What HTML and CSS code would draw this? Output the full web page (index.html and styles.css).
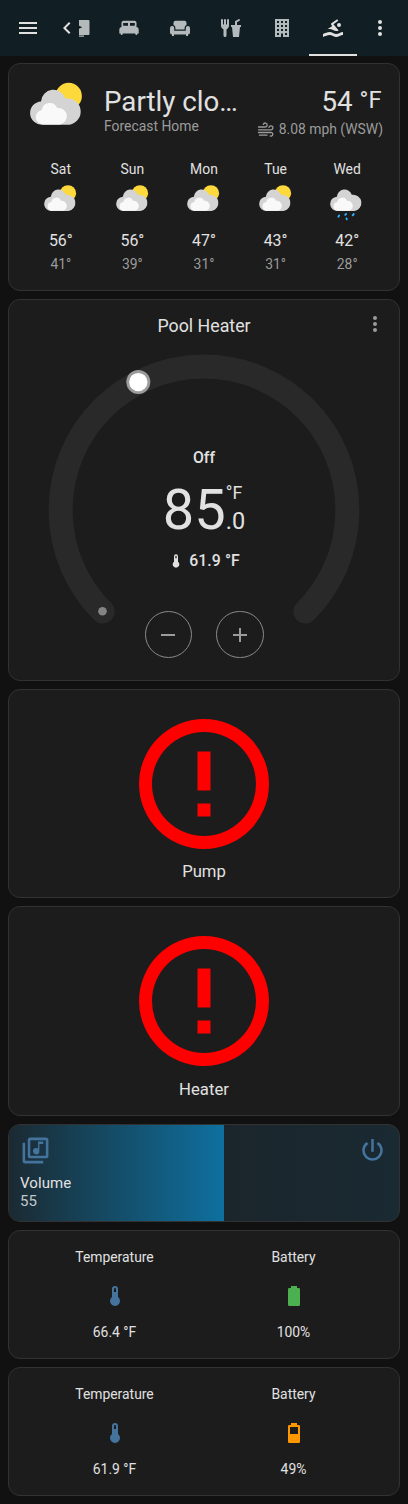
FILE: index.html
```html
<!DOCTYPE html>
<html lang="en">
<head>
<meta charset="utf-8">
<title>Home</title>
<link rel="stylesheet" href="styles.css">
</head>
<body>
<svg class="defs" width="0" height="0">
  <defs>
    <g id="cloud">
      <path fill="#d4d4d4" d="M17.500 48.700A11.500 11.500 0 0 1 16 25.400A12.400 12.400 0 0 1 40.200 22.400A13.300 13.300 0 1 1 44.500 48.700Z"/>
      <path fill="#f9f9f9" d="M18.200 48.400A7.300 7.300 0 0 1 16.800 33.900A8 8 0 0 1 32.200 32.100A8.200 8.200 0 1 1 35 48.400Z"/>
    </g>
    <g id="partly">
      <circle cx="43.700" cy="20" r="13.200" fill="#fdd93c"/>
      <use href="#cloud"/>
    </g>
    <g id="rainy">
      <use href="#cloud"/>
      <path stroke="#30b3ff" stroke-width="3" stroke-linecap="round" d="M19.700 56l-1.200 1.800M31 53.300l-1.400 1.600M43.200 53.600l-1.600 2M31.500 60.500l.6 1.500"/>
    </g>
    <path id="thermo" d="M15 13V5A3 3 0 0 0 9 5V13A5 5 0 1 0 15 13M12 4A1 1 0 0 1 13 5V8H11V5A1 1 0 0 1 12 4Z"/>
    <path id="dots" d="M12 16A2 2 0 1 1 12 20A2 2 0 1 1 12 16M12 10A2 2 0 1 1 12 14A2 2 0 1 1 12 10M12 4A2 2 0 1 1 12 8A2 2 0 1 1 12 4Z"/>
    <path id="alert" d="M11 15H13V17H11V15M11 7H13V13H11V7M12 2A10 10 0 1 0 12 22A10 10 0 1 0 12 2M12 20A8 8 0 1 1 12 4A8 8 0 1 1 12 20Z"/>
  </defs>
</svg>

<header class="bar">
  <svg class="icon bright menu" viewBox="0 0 24 24"><path d="M3 6H21V8H3V6M3 11H21V13H3V11M3 16H21V18H3V16Z"/></svg>
  <svg class="icon bright back" viewBox="0 0 24 24"><path d="M15.410 16.580L10.830 12L15.410 7.410L14 6L8 12L14 18L15.410 16.580Z"/></svg>
  <nav class="tabs">
    <span class="tab cut"><svg class="door" viewBox="0 0 11 24"><path d="M0 4H9.500A1 1 0 0 1 10.500 5V18A1 1 0 0 1 9.500 19H0V12.800L3.300 11.300L0 9.800ZM0 19.500H5V20.700H0Z"/></svg></span>
    <span class="tab"><svg class="icon" viewBox="0 0 24 24"><path fill-rule="evenodd" d="M4.500 11V6.500A2 2 0 0 1 6.500 4.700H17.500A2 2 0 0 1 19.500 6.500V11A2.500 2.500 0 0 1 21.700 13.500V17.500H20.500L20 19H18.700L18.200 17.500H5.800L5.300 19H4L3.500 17.500H2.300V13.500A2.500 2.500 0 0 1 4.500 11M6.200 7V9.800H11V7ZM13 7V9.800H17.800V7Z"/></svg></span>
    <span class="tab"><svg class="icon" viewBox="0 0 24 24"><path d="M5.500 9V6.500A2 2 0 0 1 7.500 4.700H16.500A2 2 0 0 1 18.500 6.500V9A3 3 0 0 0 16.600 11.500V13.500H7.400V11.500A3 3 0 0 0 5.500 9ZM4 10A2 2 0 0 1 6.200 12V14.800H17.800V12A2 2 0 0 1 22 12V16.500A2 2 0 0 1 20 18.500V20H18V18.500H6V20H4V18.500A2 2 0 0 1 2 16.500V12A2 2 0 0 1 4 10Z"/></svg></span>
    <span class="tab"><svg class="icon" viewBox="0 0 24 24"><path d="M3 3A1 1 0 0 0 2 4V9.500C2 11.190 3.030 12.630 4.500 13.220V19.500A1.500 1.500 0 0 0 7.500 19.500V13.220C8.970 12.630 10 11.190 10 9.500V4A1 1 0 0 0 8 4V8A.5.5 0 0 1 7 8V4A1 1 0 0 0 5 4V8A.5.5 0 0 1 4 8V4A1 1 0 0 0 3 3M19.880 3C19.750 3 19.620 3.090 19.500 3.160L16 5.250V9H12V11H13L14 21H20L21 11H22V9H18V6.340L20.500 4.840C21 4.560 21.130 4 20.840 3.500C20.630 3.140 20.260 2.950 19.880 3Z"/></svg></span>
    <span class="tab"><svg class="icon" viewBox="0 0 24 24"><path fill-rule="evenodd" d="M5 3V21H11V17.500H13V21H19V3H5M7 5H9V7H7V5M11 5H13V7H11V5M15 5H17V7H15V5M7 9H9V11H7V9M11 9H13V11H11V9M15 9H17V11H15V9M7 13H9V15H7V13M11 13H13V15H11V13M15 13H17V15H15V13M7 17H9V19H7V17M15 17H17V19H15V17Z"/></svg></span>
    <span class="tab active"><svg class="icon bright" viewBox="0 0 24 24"><path d="M2 18C4.220 17 6.440 16 8.670 16C10.890 16 13.110 18 15.330 18C17.560 18 19.780 16 22 16V19C19.780 19 17.560 21 15.330 21C13.110 21 10.890 19 8.670 19C6.440 19 4.220 20 2 21V18M8.670 13C7.890 13 7.120 13.120 6.350 13.320L11.270 9.880L10.230 8.640C10.090 8.470 10 8.240 10 8C10 7.660 10.170 7.350 10.440 7.170L16.160 3.170L17.310 4.800L12.470 8.190L17.700 14.420C16.910 14.750 16.120 15 15.330 15C13.110 15 10.890 13 8.670 13M18 7A2 2 0 1 1 18 11A2 2 0 1 1 18 7Z"/></svg></span>
  </nav>
  <svg class="icon bright more" viewBox="0 0 24 24"><use href="#dots"/></svg>
</header>

<main class="cards">
  <section class="card weather">
    <div class="now">
      <svg class="now-icon" viewBox="0 0 64 64"><use href="#partly"/></svg>
      <div class="now-state">
        <div class="state">Partly clo…</div>
        <div class="sub">Forecast Home</div>
      </div>
      <div class="now-temp">
        <div class="temp">54 <span>°F</span></div>
        <div class="sub wind"><svg viewBox="0 0 18 18"><path d="M1.500 6H7.500M6.300 3.400A2 2 0 1 1 8.300 6M1.500 8.800H14M12 6.400A2 2 0 1 1 14 8.800M1.500 11.500H14.500A1.800 1.800 0 1 1 13.200 15M2.500 14.200H10"/></svg>8.08 mph (WSW)</div>
      </div>
    </div>
    <div class="days">
      <div class="day">Sat<svg viewBox="0 0 64 64"><use href="#partly"/></svg><b>56°</b><i>41°</i></div>
      <div class="day">Sun<svg viewBox="0 0 64 64"><use href="#partly"/></svg><b>56°</b><i>39°</i></div>
      <div class="day">Mon<svg viewBox="0 0 64 64"><use href="#partly"/></svg><b>47°</b><i>31°</i></div>
      <div class="day">Tue<svg viewBox="0 0 64 64"><use href="#partly"/></svg><b>43°</b><i>31°</i></div>
      <div class="day">Wed<svg viewBox="0 0 64 64"><use href="#rainy"/></svg><b>42°</b><i>28°</i></div>
    </div>
  </section>

  <section class="card heater">
    <svg class="icon heater-more" viewBox="0 0 24 24"><use href="#dots"/></svg>
    <h2 class="heater-title">Pool Heater</h2>
    <div class="dial">
      <svg class="ring" viewBox="0 0 312 312">
        <path d="M54.600 257.400A143.400 143.400 0 1 1 257.400 257.400" fill="none" stroke="#292929" stroke-width="24" stroke-linecap="round"/>
        <circle cx="54.500" cy="257.300" r="4.300" fill="#848484"/>
        <circle cx="90.300" cy="28.100" r="12" fill="#9b9b9b"/>
        <circle cx="90.300" cy="28.100" r="9.200" fill="#fff"/>
      </svg>
      <div class="readout">
        <div class="mode">Off</div>
        <div class="target"><span class="whole">85</span><span class="parts"><span class="unit">°F</span><span class="dec">.0</span></span></div>
        <div class="current"><svg viewBox="0 0 24 24"><use href="#thermo"/></svg>61.9 °F</div>
        <div class="steps">
          <span class="step"><svg class="icon" viewBox="0 0 24 24"><path d="M19 13H5V11H19V13Z"/></svg></span>
          <span class="step"><svg class="icon" viewBox="0 0 24 24"><path d="M19 13H13V19H11V13H5V11H11V5H13V11H19V13Z"/></svg></span>
        </div>
      </div>
    </div>
  </section>

  <section class="card alert"><svg viewBox="0 0 24 24"><use href="#alert"/></svg><span>Pump</span></section>
  <section class="card alert"><svg viewBox="0 0 24 24"><use href="#alert"/></svg><span>Heater</span></section>

  <section class="card volume">
    <div class="fill" style="width: 55%"></div>
    <div class="volume-body">
      <div class="volume-icons">
        <svg viewBox="0 0 24 24"><path fill-rule="evenodd" d="M20 2H8A2 2 0 0 0 6 4V16A2 2 0 0 0 8 18H20A2 2 0 0 0 22 16V4A2 2 0 0 0 20 2M20 16H8V4H20V16M12.500 15A2.500 2.500 0 0 0 15 12.500V7H18V5H14V10.500A2.500 2.500 0 1 0 12.500 15M4 6H2V20A2 2 0 0 0 4 22H18V20H4V6Z"/></svg>
        <svg viewBox="0 0 24 24"><path d="M16.560 5.440L15.110 6.890C16.840 7.940 18 9.830 18 12A6 6 0 0 1 6 12C6 9.830 7.160 7.940 8.880 6.880L7.440 5.440C5.360 6.880 4 9.280 4 12A8 8 0 0 0 20 12C20 9.280 18.640 6.880 16.560 5.440M13 3H11V13H13Z"/></svg>
      </div>
      <div class="volume-name">Volume</div>
      <div class="volume-value">55</div>
    </div>
  </section>

  <section class="card glance">
    <div class="entity">Temperature<svg class="icon blue" viewBox="0 0 24 24"><use href="#thermo"/></svg><span>66.4 °F</span></div>
    <div class="entity">Battery<svg class="icon green" viewBox="0 0 24 24"><path d="M16.670 4H15V2H9V4H7.330A1.330 1.330 0 0 0 6 5.330V20.670A1.330 1.330 0 0 0 7.330 22H16.670A1.330 1.330 0 0 0 18 20.670V5.330A1.330 1.330 0 0 0 16.670 4Z"/></svg><span>100%</span></div>
  </section>
  <section class="card glance">
    <div class="entity">Temperature<svg class="icon blue" viewBox="0 0 24 24"><use href="#thermo"/></svg><span>61.9 °F</span></div>
    <div class="entity">Battery<svg class="icon orange" viewBox="0 0 24 24"><path fill-rule="evenodd" d="M16.670 4H15V2H9V4H7.330A1.330 1.330 0 0 0 6 5.330V20.670A1.330 1.330 0 0 0 7.330 22H16.670A1.330 1.330 0 0 0 18 20.670V5.330A1.330 1.330 0 0 0 16.670 4M16 13H8V6H16V13Z"/></svg><span>49%</span></div>
  </section>
</main>
</body>
</html>
```
FILE: styles.css
```css
* { box-sizing: border-box; }
body { margin: 0; background: #111; color: #e1e1e1; font-family: Roboto, "Noto Sans", sans-serif; font-size: 13.900px; line-height: 20px; }
svg { display: block; flex: none; fill: currentColor; }
.defs { position: absolute; }
.icon { width: 24px; height: 24px; }
.bar { height: 56px; background: #111e23; color: #b4b9bb; display: flex; align-items: center; padding-left: 15.500px; }
.bright { color: #e1e1e1; }
.back { margin-left: 15.500px; }
.tabs { display: flex; align-self: stretch; }
.tab { width: 51px; display: flex; align-items: center; justify-content: center; }
.tab.cut { width: 24px; justify-content: flex-start; }
.door { width: 11px; height: 24px; }
.tab.active { width: 48px; margin-left: 1.5px; border-bottom: 2px solid #e1e1e1; padding-top: 2px; }
.more { margin-left: 11px; }

.cards { display: flex; flex-direction: column; gap: 8px; padding: 7.400px 8px 8px; }
.card { background: #1c1c1c; border: 1px solid #323232; border-radius: 12px; }

.weather { height: 227.600px; padding: 12px 16px 0; }
.now { display: flex; height: 83px; }
.now-icon { width: 64px; height: 64px; }
.now-state { flex: 1; min-width: 0; margin-left: 15px; padding-top: 8px; }
.state { font-size: 27.700px; line-height: 35px; white-space: nowrap; }
.sub { color: #9b9b9b; line-height: 14px; }
.now-temp { text-align: right; padding-top: 8px; }
.temp { font-size: 27.700px; line-height: 35px; padding-right: 1.500px; }
.temp span { font-size: 23.700px; vertical-align: 3px; line-height: 24px; }
.wind { display: flex; align-items: center; justify-content: flex-end; gap: 4px; }
.wind svg { width: 18px; height: 18px; fill: none; stroke: currentColor; stroke-width: 1.300; stroke-linecap: round; margin-top: 2px; }
.days { display: flex; }
.day { flex: 1; display: flex; flex-direction: column; align-items: center; }
.day svg { width: 39.500px; height: 39.500px; margin: 2px 0 8.500px; }
.day b { font-weight: 400; font-size: 15.900px; line-height: 24px; }
.day i { font-style: normal; color: #9b9b9b; margin-top: 1px; }

.heater { height: 382px; position: relative; display: flex; flex-direction: column; align-items: center; padding-top: 14px; }
.heater-more { position: absolute; top: 12px; right: 12px; color: #9b9b9b; }
.heater-title { margin: 0; font-size: 17.800px; line-height: 24px; font-weight: 400; }
.dial { display: grid; margin-top: 16px; }
.ring { grid-area: 1 / 1; width: 312px; height: 312px; }
.readout { grid-area: 1 / 1; display: flex; flex-direction: column; align-items: center; padding-top: 92px; }
.mode { font-size: 15.800px; line-height: 24px; font-weight: 500; }
.target { display: flex; margin-top: 8px; }
.whole { font-size: 56px; line-height: 64px; }
.parts { display: flex; flex-direction: column; padding-top: 3px; }
.unit { font-size: 17.800px; line-height: 24px; }
.dec { font-size: 23.500px; line-height: 32px; }
.current { display: flex; align-items: center; gap: 5px; font-size: 15.800px; line-height: 24px; font-weight: 500; margin-top: 7px; letter-spacing: .1px; }
.current svg { width: 16px; height: 16px; }
.steps { display: flex; gap: 24px; margin-top: 38px; }
.step { width: 47.500px; height: 47.500px; border: 1px solid #8a8a8a; border-radius: 50%; color: #9b9b9b; display: flex; align-items: center; justify-content: center; }

.alert { height: 209.300px; display: flex; flex-direction: column; align-items: center; padding-top: 16px; font-size: 16.700px; }
.alert svg { width: 156px; height: 156px; color: #f00; fill-rule: evenodd; }
.alert span { line-height: 19px; }
.alert + .alert span { margin-top: .5px; }

.volume { height: 98.600px; display: grid; overflow: hidden; background: linear-gradient(90deg, #1c1f24, #1a2a32); }
.fill { grid-area: 1 / 1; background: linear-gradient(90deg, #1b2a32, #0e709f); }
.volume-body { grid-area: 1 / 1; padding: 10.500px 11px; font-size: 15px; line-height: 18px; }
.volume-icons { display: flex; justify-content: space-between; color: #44739e; }
.volume-icons svg { width: 31px; height: 31px; }
.volume-name { margin-top: 8px; letter-spacing: .1px; }
.volume-value { color: #c1c8cc; }

.glance { height: 128.700px; display: flex; padding: 16px 16px 0; }
.entity { flex: 1; display: flex; flex-direction: column; align-items: center; }
.entity svg { margin: 17px 0 14px; }
.blue { color: #44739e; }
.green { color: #4caf50; }
.orange { color: #ff9800; }
```
